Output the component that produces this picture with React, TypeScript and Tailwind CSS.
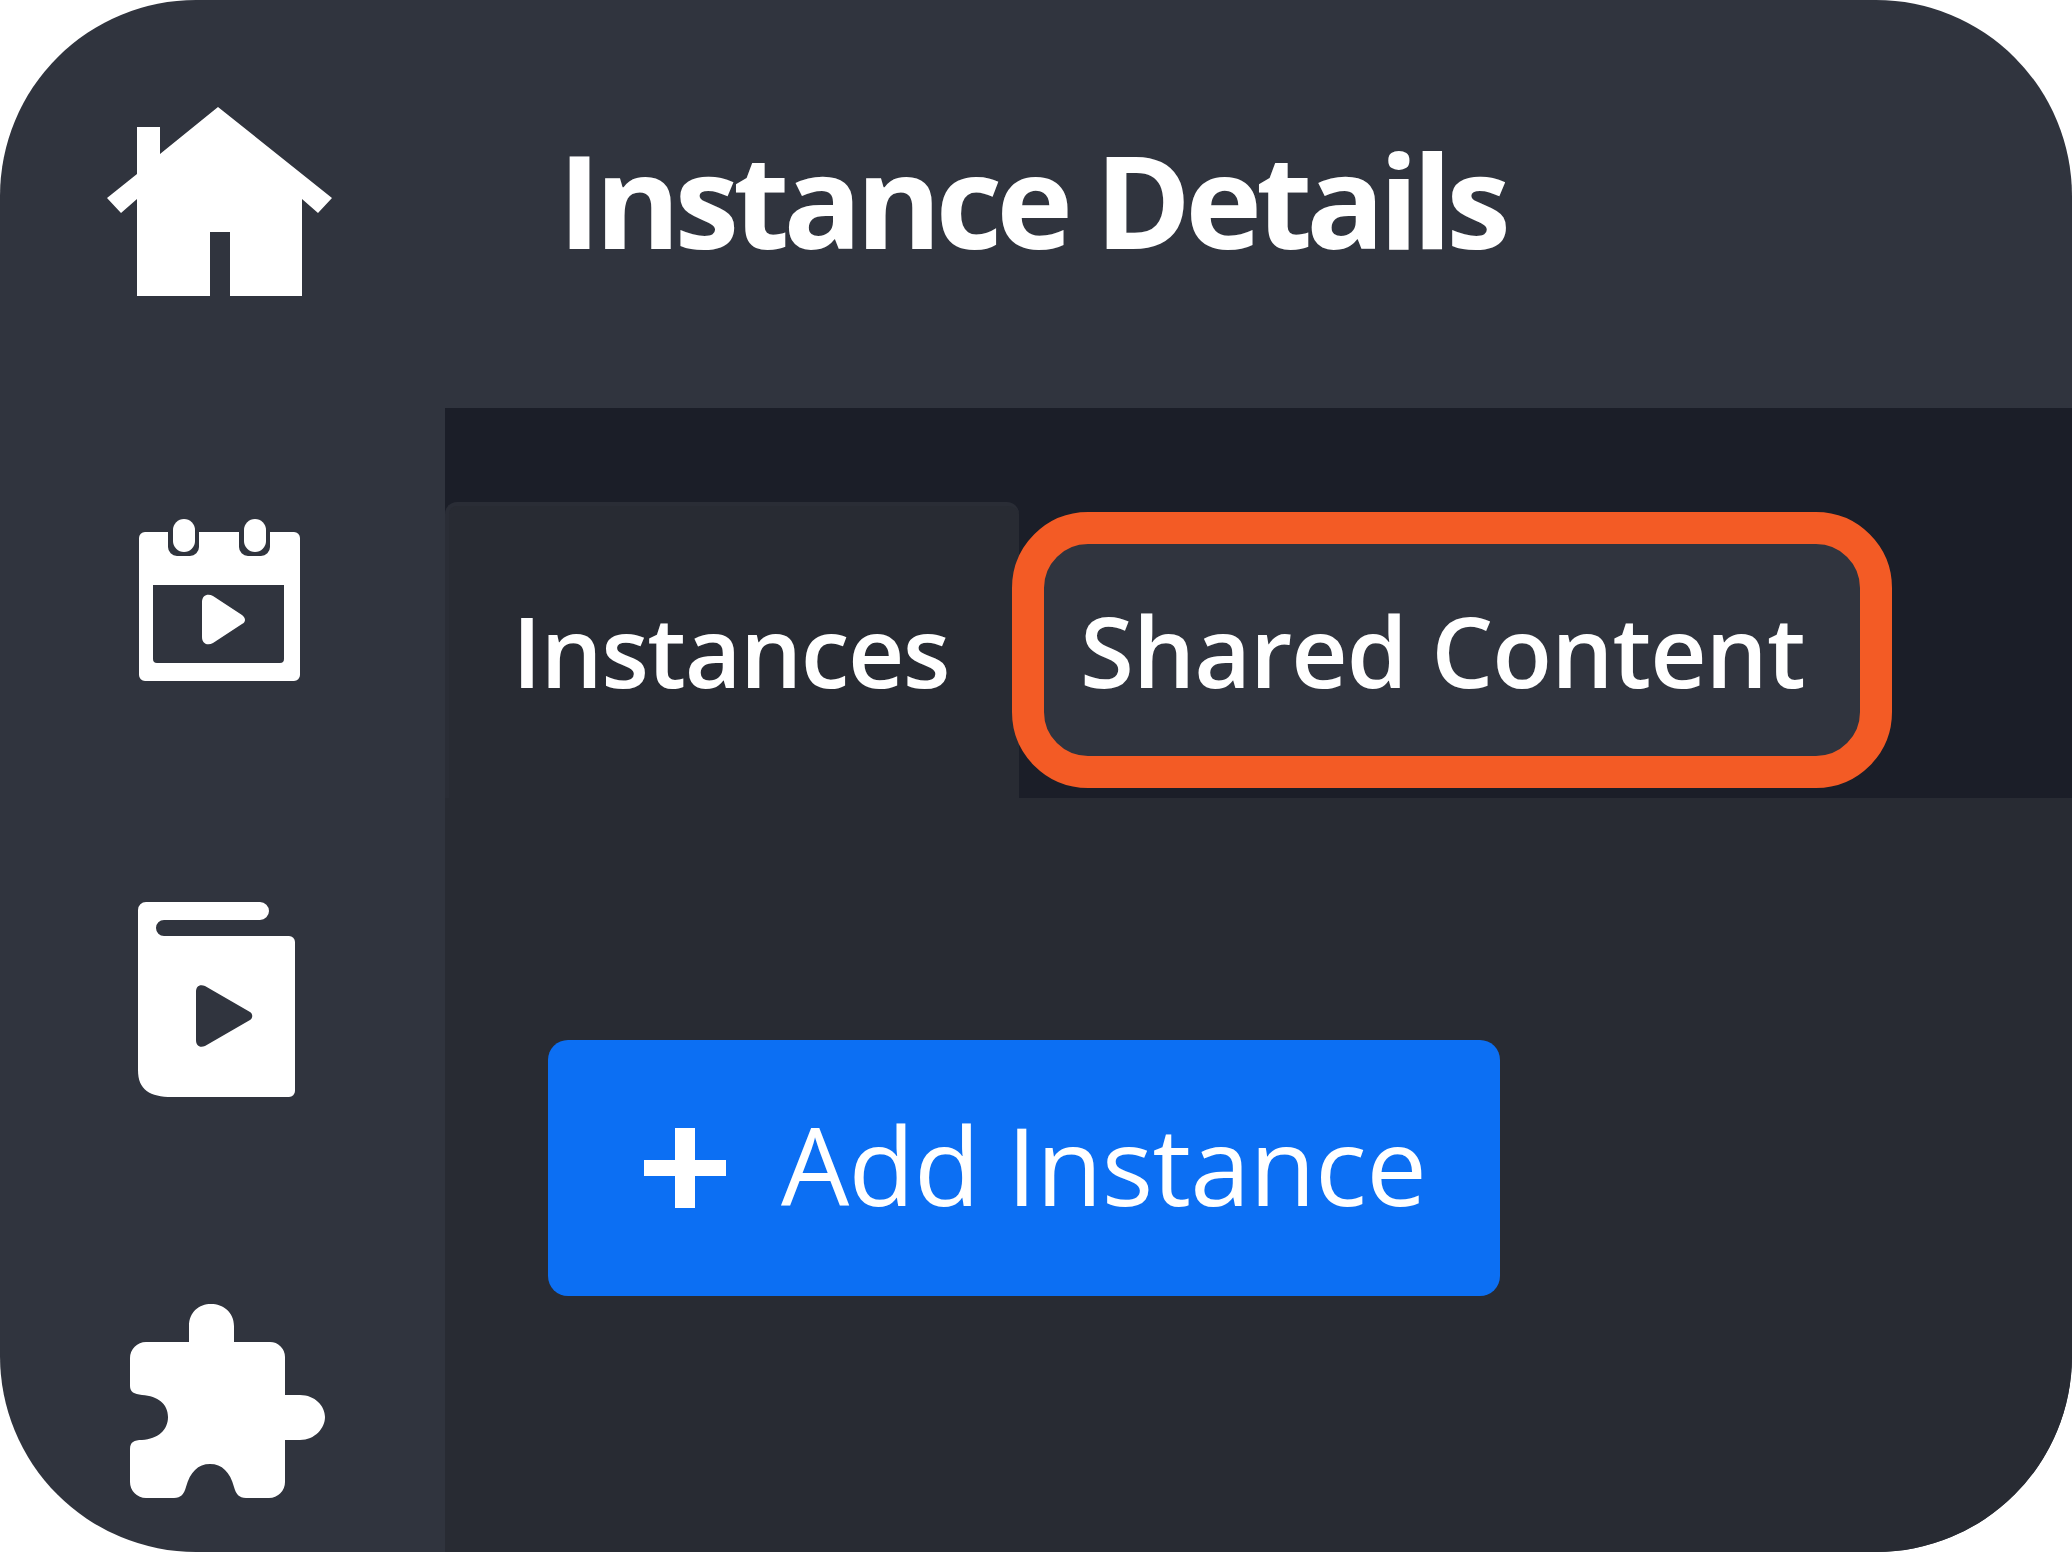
import React from 'react'

const Sidebar = () => (
  <div className="w-[445px] shrink-0 pl-[107px] pt-[107px]">
    {/* home */}
    <svg width="226" height="192" viewBox="0 0 226 192" className="block">
      <path fill="#fff" d="M111 0 225 91 211 106 195 92V189H123V125H103V189H30V92L14 106 0 91 30 67V20H53V47Z" />
    </svg>
    {/* calendar with play */}
    <svg width="161" height="162" viewBox="0 0 161 162" className="ml-[32px] mt-[220px] block">
      <path
        fill="#fff"
        fillRule="evenodd"
        d="M6 13H29V28a9 9 0 0 0 9 9H51a9 9 0 0 0 9-9V13H100V28a9 9 0 0 0 9 9H122a9 9 0 0 0 9-9V13H155a6 6 0 0 1 6 6V156a6 6 0 0 1-6 6H6a6 6 0 0 1-6-6V19a6 6 0 0 1 6-6ZM14 66V140a4 4 0 0 0 4 4H141a4 4 0 0 0 4-4V66Z"
      />
      <rect x="34" y="0" width="22" height="33" rx="11" fill="#fff" />
      <rect x="105" y="0" width="22" height="33" rx="11" fill="#fff" />
      <path fill="#fff" d="M63 83C63 76 69 74 74 77L103 96C107 99 107 103 103 105L74 124C69 127 63 125 63 118Z" />
    </svg>
    {/* book with play */}
    <svg width="158" height="195" viewBox="0 0 158 195" className="ml-[31px] mt-[221px] block">
      <path
        fill="#fff"
        fillRule="evenodd"
        d="M8 0H122a9 9 0 0 1 0 18H26a8 8 0 0 0 0 16H151a6 6 0 0 1 6 6V189a6 6 0 0 1-6 6H34C12 195 0 188 0 168V8a8 8 0 0 1 8-8ZM67 84C61 82 58 85 58 90V138C58 144 62 146 67 144L112 118C115 116 115 112 112 110Z"
      />
    </svg>
    {/* puzzle piece */}
    <svg width="195" height="194" viewBox="0 0 195 194" className="ml-[23px] mt-[207px] block">
      <path
        fill="#fff"
        d="M16 38H59V22C59 8 69 0 81 0S104 8 104 22V38H140a15 15 0 0 1 15 15V91H170C185 91 195 102 195 113S185 136 170 136H155V178a16 16 0 0 1-16 16H116C109 194 106 190 104 183 100 168 92 160 80 160S60 168 56 183C54 190 51 194 44 194H16a16 16 0 0 1-16-16V145C0 138 4 136 12 136 28 135 38 126 38 113S28 92 12 91C4 90 0 88 0 82V54a16 16 0 0 1 16-16Z"
      />
    </svg>
  </div>
)

const App = () => {
  return (
    <div className="min-h-[1552px] w-[2072px] bg-white font-['Open_Sans','Noto_Sans',sans-serif]">
      <div className="flex h-[1552px] overflow-hidden rounded-[196px] bg-[#30343e] text-white">
        <Sidebar />
        <div className="flex min-w-0 flex-1 flex-col">
          <div className="flex h-[408px] shrink-0 items-start pl-[113px] pt-[114px]">
            <h1 className="text-[130px] leading-[170px] font-bold tracking-[-6px]">Instance Details</h1>
          </div>
          <div className="flex h-[390px] shrink-0 items-end bg-[#1b1e28]">
            <div className="flex h-[296px] w-[574px] shrink-0 items-start rounded-t-[12px] border-l-4 border-t-4 border-[#2a2d36] bg-[#282b33] pl-[63px] pt-[79px]">
              <span className="text-[98px] leading-[130px] font-semibold tracking-[-1.500px]">Instances</span>
            </div>
            <div className="mb-[10px] ml-[-7px] flex h-[276px] w-[880px] shrink-0 items-center rounded-[76px] border-[32px] border-[#f35b25] bg-[#30343e] pl-[36px]">
              <span className="text-[98px] leading-[130px] font-semibold tracking-[-1px]">Shared Content</span>
            </div>
          </div>
          <div className="flex-1 bg-[#282b33] pl-[103px] pt-[242px]">
            <button className="flex h-[256px] w-[952px] items-center rounded-[20px] bg-[#0c6ff3] pl-[96px] text-[108px] leading-none tracking-[-0.700px]">
              <svg width="82" height="80" viewBox="0 0 82 80" className="mr-[55px] shrink-0">
                <path fill="#fff" d="M31 0h20v32h31v16H51v32H31V48H0V32h31z" />
              </svg>
              <span className="mb-[6px]">Add Instance</span>
            </button>
          </div>
        </div>
      </div>
    </div>
  )
}

export default App
